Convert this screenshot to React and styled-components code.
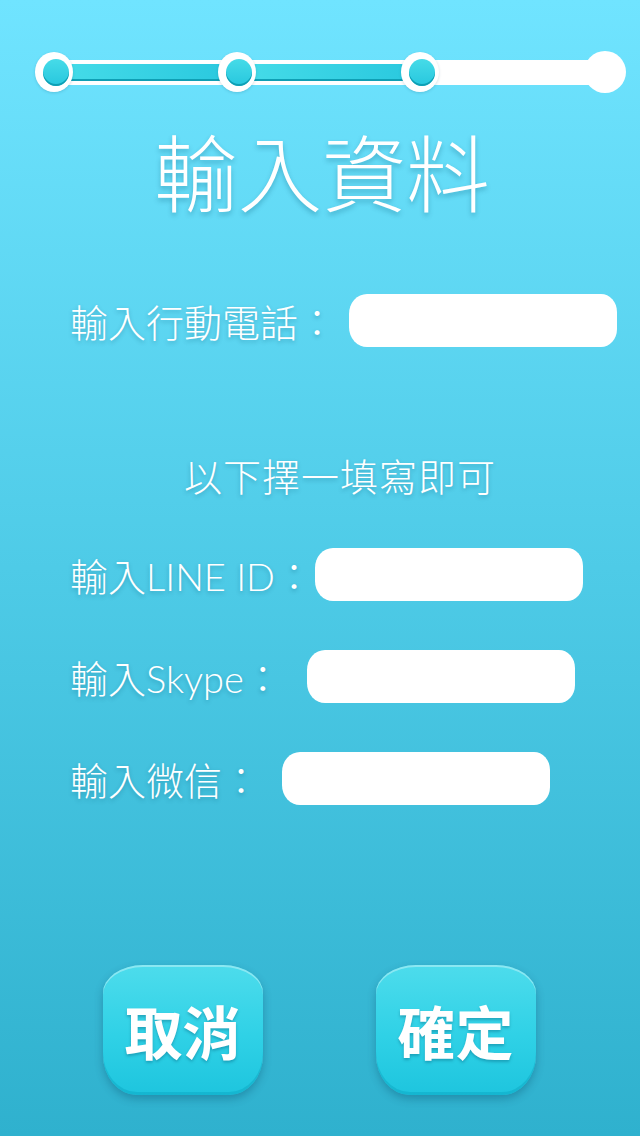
import React from "react";
import styled, { createGlobalStyle } from "styled-components";

const GlobalStyle = createGlobalStyle`
  html, body {
    margin: 0;
    padding: 0;
  }
  body {
    font-family: "Lato", "Noto Sans CJK TC", sans-serif;
  }
`;

const steps = [true, true, true, false];

const rows = [
  { label: "輸入LINE ID：", width: 245 },
  { label: "輸入Skype：", width: 237 },
  { label: "輸入微信：", width: 212 },
];

export default function App() {
  return (
    <StyledPage>
      <GlobalStyle />
      <StyledStepper>
        {steps.map((done, i) => (
          <React.Fragment key={i}>
            {i > 0 && (
              <StyledConnector>{done && <span className="fill" />}</StyledConnector>
            )}
            <StyledStep $done={done}>{done && <span className="dot" />}</StyledStep>
          </React.Fragment>
        ))}
      </StyledStepper>

      <StyledTitle>輸入資料</StyledTitle>

      <StyledRow $top={82}>
        <StyledLabel $width={279}>輸入行動電話：</StyledLabel>
        <StyledInput type="text" />
      </StyledRow>

      <StyledHint>以下擇一填寫即可</StyledHint>

      {rows.map((row, i) => (
        <StyledRow key={row.label} $top={i === 0 ? 54 : 49}>
          <StyledLabel $width={row.width}>{row.label}</StyledLabel>
          <StyledInput type="text" />
        </StyledRow>
      ))}

      <StyledButtons>
        <StyledButton type="button">取消</StyledButton>
        <StyledButton type="button">確定</StyledButton>
      </StyledButtons>
    </StyledPage>
  );
}

// ===============================================================================================================================
//                                              STYLES
// ===============================================================================================================================

const StyledPage = styled.div`
  width: 640px;
  height: 1136px;
  overflow: hidden;
  display: flex;
  flex-direction: column;
  background: linear-gradient(180deg, #70e4ff 0%, #4ecbe7 50%, #2fb1ce 100%);
  color: #fff;
`;

const StyledStepper = styled.div`
  display: flex;
  align-items: center;
  margin: 51px 0 0 35px;
  height: 42px;
`;

const StyledStep = styled.div`
  position: relative;
  z-index: 1;
  flex: none;
  width: ${(p) => (p.$done ? 38 : 42)}px;
  height: ${(p) => (p.$done ? 40 : 42)}px;
  border-radius: 50%;
  background: #fff;
  display: flex;
  align-items: center;
  justify-content: center;
  box-shadow: ${(p) => (p.$done ? "0 1px 3px rgba(0, 70, 100, 0.18)" : "none")};

  .dot {
    width: 26px;
    height: 27px;
    margin-left: 3px;
    border-radius: 50%;
    background: linear-gradient(180deg, #46dbe8 0%, #27c7de 100%);
    box-shadow: inset 0 -2px 0 #0f9fb4;
  }
`;

const StyledConnector = styled.div`
  position: relative;
  z-index: 0;
  flex: none;
  width: 157px;
  height: 25px;
  margin: 0 -6px;
  background: #fff;
  display: flex;
  align-items: center;

  .fill {
    width: 100%;
    height: 17px;
    background: linear-gradient(90deg, #44dbe8 0%, #2bc9df 100%);
    box-shadow: inset 0 -2px 0 #0f9fb4;
  }
`;

const StyledTitle = styled.h1`
  margin: 35px 0 0;
  font-family: "Noto Sans CJK TC", sans-serif;
  font-size: 84px;
  font-weight: 300;
  line-height: 1;
  text-align: center;
  padding-left: 4px;
  text-shadow: 0 3px 5px rgba(0, 80, 110, 0.3);
`;

const StyledRow = styled.div`
  display: flex;
  align-items: center;
  margin-top: ${(p) => p.$top}px;
  padding-left: 70px;
  height: 53px;
`;

const StyledLabel = styled.label`
  flex: none;
  width: ${(p) => p.$width}px;
  white-space: nowrap;
  font-family: "Lato", "Noto Sans CJK TC", sans-serif;
  font-size: 38px;
  font-weight: 300;
  text-shadow: 0 2px 4px rgba(0, 80, 110, 0.3);
`;

const StyledInput = styled.input`
  flex: none;
  width: 268px;
  height: 53px;
  box-sizing: border-box;
  border: none;
  outline: none;
  border-radius: 18px 16px 16px 18px / 20px 18px 18px 20px;
  background: #fff;
  padding: 0 16px;
  font-size: 26px;
`;

const StyledHint = styled.p`
  margin: 109px 0 0;
  padding-left: 40px;
  text-align: center;
  font-family: "Noto Sans CJK TC", sans-serif;
  font-size: 38px;
  font-weight: 300;
  line-height: 1;
  letter-spacing: 1px;
  text-shadow: 0 2px 4px rgba(0, 80, 110, 0.3);
`;

const StyledButtons = styled.div`
  display: flex;
  justify-content: center;
  gap: 113px;
  margin-top: 160px;
  padding-right: 2px;
`;

const StyledButton = styled.button`
  width: 160px;
  height: 130px;
  border: none;
  padding: 0;
  border-radius: 40px 40px 34px 34px / 28px 28px 40px 40px;
  background: linear-gradient(180deg, #4ddcec 0%, #2fd1e6 55%, #1ec5de 100%);
  box-shadow: inset 0 2px 0 rgba(255, 255, 255, 0.35), inset 0 -3px 0 rgba(0, 150, 180, 0.3),
    0 4px 8px rgba(0, 60, 90, 0.3);
  color: #fff;
  font-family: "Noto Sans CJK TC", sans-serif;
  font-size: 58px;
  font-weight: 700;
  line-height: 1;
  text-shadow: 0 2px 3px rgba(0, 80, 110, 0.35);
  cursor: pointer;
`;
